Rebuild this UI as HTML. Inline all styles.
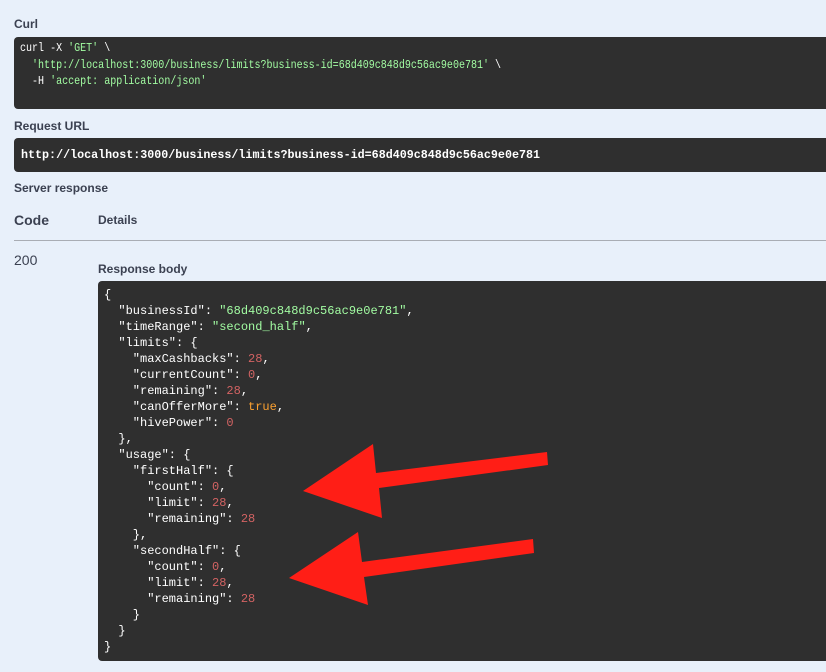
<!DOCTYPE html>
<html><head><style>
body{margin:0;width:826px;height:672px;background:#e8f0fa;position:relative;overflow:hidden;font-family:"Liberation Sans",sans-serif;color:#3b4151}
.a{position:absolute;white-space:pre}
.lbl{font-size:12px;font-weight:bold;color:#3b4151}
.box{position:absolute;background:#2f2f2f;border-radius:4px 0 0 4px}
.m{font-family:"Liberation Mono",monospace;color:#fff}
.s{color:#a2fca2}.n{color:#d36363}.b{color:#fca130}
</style></head><body>
<div class="a lbl" style="left:14px;top:17px">Curl</div>
<div class="box" style="left:14px;top:37px;width:820px;height:72px"></div>
<div class="a m" style="left:20px;top:40px;font-size:12px;line-height:16.5px;transform:scaleX(0.835);transform-origin:0 0">curl -X <span class="s">'GET'</span> \
  <span class="s">'http://localhost:3000/business/limits?business-id=68d409c848d9c56ac9e0e781'</span> \
  -H <span class="s">'accept: application/json'</span></div>
<div class="a lbl" style="left:14px;top:119px">Request URL</div>
<div class="box" style="left:14px;top:138px;width:820px;height:34px"></div>
<div class="a m" style="left:21px;top:148px;font-size:11.7px;font-weight:bold">http://localhost:3000/business/limits?business-id=68d409c848d9c56ac9e0e781</div>
<div class="a lbl" style="left:14px;top:181px">Server response</div>
<div class="a" style="left:14px;top:212px;font-size:14px;font-weight:bold">Code</div>
<div class="a lbl" style="left:98px;top:213px">Details</div>
<div style="position:absolute;left:14px;top:240px;width:812px;height:1px;background:#a9adb4"></div>
<div class="a" style="left:14px;top:252px;font-size:14px">200</div>
<div class="a lbl" style="left:98px;top:262px">Response body</div>
<div class="box" style="left:98px;top:281px;width:740px;height:380px"></div>
<div class="a m" style="left:104px;top:287px;font-size:12px;line-height:16px">{
  "businessId": <span class="s">"68d409c848d9c56ac9e0e781"</span>,
  "timeRange": <span class="s">"second_half"</span>,
  "limits": {
    "maxCashbacks": <span class="n">28</span>,
    "currentCount": <span class="n">0</span>,
    "remaining": <span class="n">28</span>,
    "canOfferMore": <span class="b">true</span>,
    "hivePower": <span class="n">0</span>
  },
  "usage": {
    "firstHalf": {
      "count": <span class="n">0</span>,
      "limit": <span class="n">28</span>,
      "remaining": <span class="n">28</span>
    },
    "secondHalf": {
      "count": <span class="n">0</span>,
      "limit": <span class="n">28</span>,
      "remaining": <span class="n">28</span>
    }
  }
}</div>
<svg style="position:absolute;left:0;top:0" width="826" height="672">
<polygon fill="#ff1e16" points="303,491 373,444 376,473 547,452 548,465 379,488 382,518"/>
<polygon fill="#ff1e16" points="289,578 358,532 362,562 533,539 534,553 364,577 368,605"/>
</svg>
</body></html>
